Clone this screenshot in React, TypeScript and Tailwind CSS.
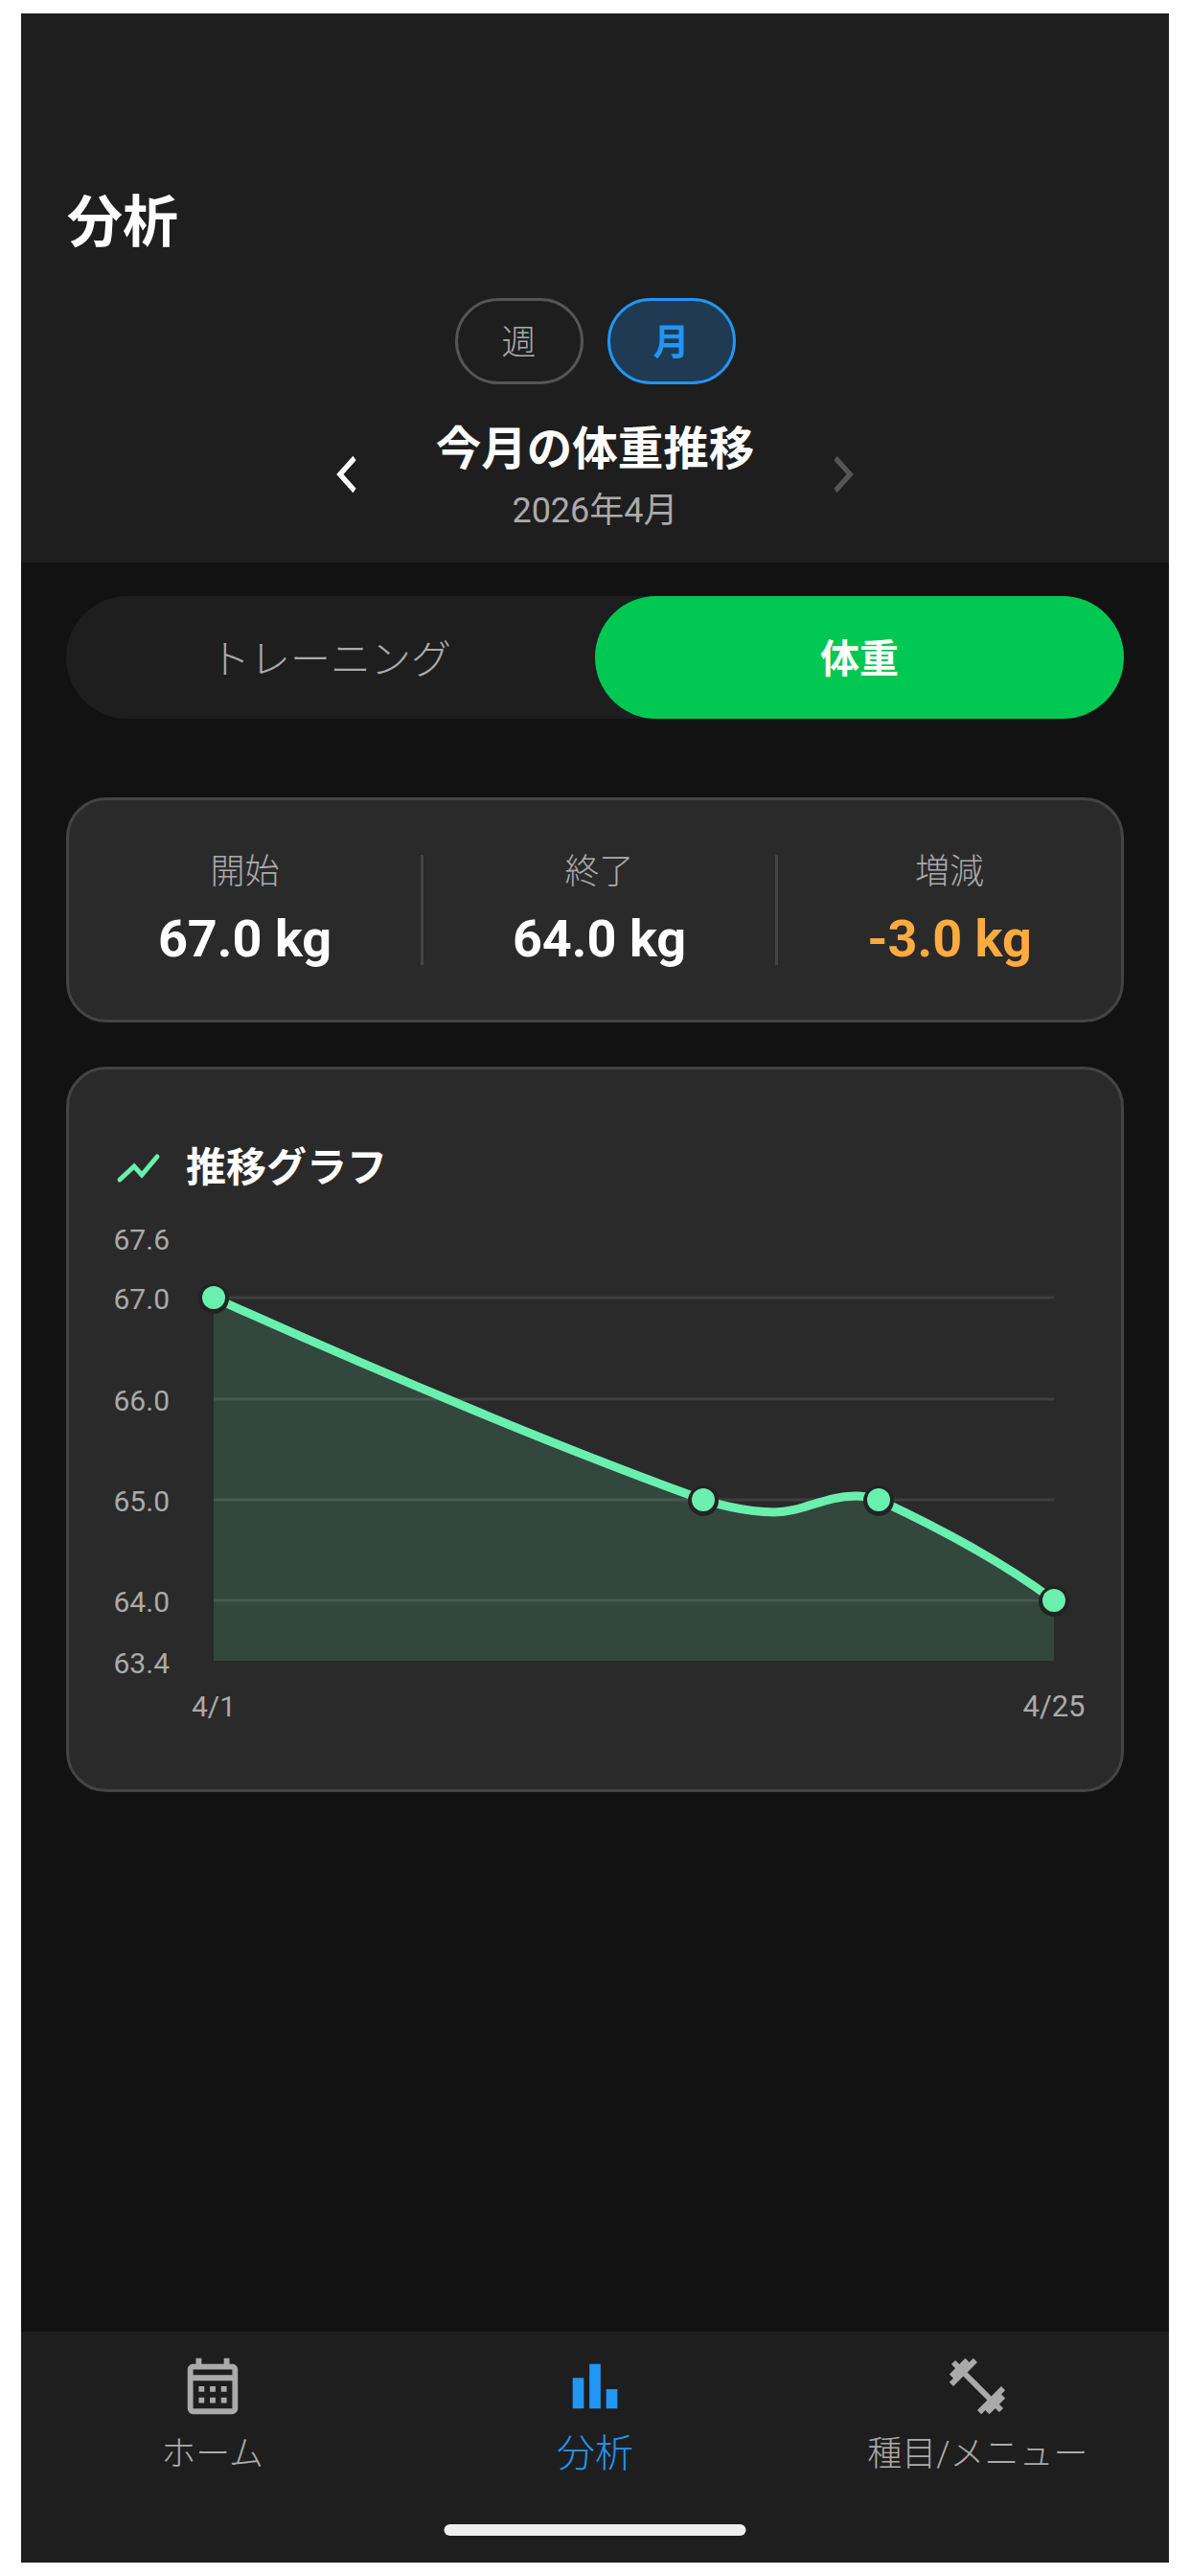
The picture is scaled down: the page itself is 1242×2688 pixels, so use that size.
import React from 'react';
import { MdFitnessCenter, MdOutlineCalendarMonth } from 'react-icons/md';

const yLabels = [
  { label: '67.6', y: 1293 },
  { label: '67.0', y: 1355 },
  { label: '66.0', y: 1461 },
  { label: '65.0', y: 1566 },
  { label: '64.0', y: 1671 },
  { label: '63.4', y: 1735 },
];

const gridLines = [1354, 1460, 1565, 1670];

const points = [
  { x: 223, y: 1354 },
  { x: 734, y: 1565 },
  { x: 917, y: 1565 },
  { x: 1100, y: 1670 },
];

const linePath =
  'M223 1354 C400 1434 600 1517 734 1565 C760 1573 785 1578 808 1578 C838 1578 860 1561 893 1561 C900 1561 910 1563 917 1565 C960 1585 1040 1625 1100 1670';

const stats = [
  { label: '開始', value: '67.0 kg', color: 'text-white' },
  { label: '終了', value: '64.0 kg', color: 'text-white' },
  { label: '増減', value: '-3.0 kg', color: 'text-[#ffab40]' },
];

function WeightChart() {
  return (
    <svg viewBox="72 1270 1098 530" className="mt-[26px] block h-[530px] w-[1098px]">
      <path d={`${linePath} L1100 1733 L223 1733 Z`} fill="#69f0ae" fillOpacity="0.15" />
      {gridLines.map((y) => (
        <line key={y} x1="223" x2="1100" y1={y} y2={y} stroke="#ffffff" strokeOpacity="0.1" strokeWidth="3" />
      ))}
      <path d={linePath} fill="none" stroke="#69f0ae" strokeWidth="9" strokeLinecap="round" />
      {points.map((p) => (
        <g key={p.x}>
          <circle cx={p.x} cy={p.y + 1} r="16" fill="#232323" />
          <circle cx={p.x} cy={p.y} r="12" fill="#69f0ae" />
        </g>
      ))}
      {yLabels.map((t) => (
        <text key={t.label} x="177" y={t.y} textAnchor="end" dominantBaseline="central" fontSize="30" fill="#aaaaaa">
          {t.label}
        </text>
      ))}
      <text x="223" y="1780" textAnchor="middle" dominantBaseline="central" fontSize="30" fill="#aaaaaa">
        4/1
      </text>
      <text x="1100" y="1780" textAnchor="middle" dominantBaseline="central" fontSize="31" fill="#aaaaaa">
        4/25
      </text>
    </svg>
  );
}

function BarsIcon() {
  return (
    <svg viewBox="0 0 24 24" className="h-[70px] w-[70px]" fill="#2196f3">
      <path d="M4 9h4v11H4zm12 4h4v7h-4zm-6-9h4v16h-4z" />
    </svg>
  );
}

function NavItem({ icon, label, active }: { icon: React.ReactNode; label: string; active?: boolean }) {
  return (
    <div className="flex flex-col items-center">
      <div className="flex h-[80px] items-center justify-center">{icon}</div>
      <span className={`mt-[6px] font-light leading-[50px] ${active ? 'text-[40px] text-[#2196f3]' : 'text-[36px] text-[#aaaaaa]'}`}>{label}</span>
    </div>
  );
}

export default function App() {
  return (
    <div className="min-h-[2688px] bg-white px-[22px] pt-[14px] font-['Roboto','Noto_Sans_CJK_JP',sans-serif]">
      <div className="flex h-[2660px] flex-col bg-[#121212]">
        {/* Header */}
        <header className="h-[573px] shrink-0 bg-[#1e1e1e] pt-[183px]">
          <h1 className="pl-[48px] text-[58px] font-bold leading-[70px] text-white">分析</h1>
          <div className="mt-[44px] flex justify-center gap-[25px]">
            <button className="flex h-[90px] w-[134px] items-center justify-center rounded-[45px] border-[3px] border-[#555555] pt-[3px] text-[36px] font-light text-[#aaaaaa]">
              週
            </button>
            <button className="flex h-[90px] w-[134px] items-center justify-center rounded-[45px] border-[3px] border-[#2196f3] bg-[#1f3a52] pt-[3px] text-[38px] font-bold text-[#2196f3]">
              月
            </button>
          </div>
          <div className="mt-[40px] flex items-center justify-center gap-[67px]">
            <svg viewBox="0 0 48 48" className="-mt-[7px] h-[48px] w-[48px]" fill="none" stroke="#ffffff" strokeWidth="6">
              <polyline points="34,7 15,24 34,41" transform="translate(24 24) scale(0.8 1) translate(-24 -24)" />
            </svg>
            <div className="flex w-[336px] flex-col items-center pt-[3px]">
              <span className="whitespace-nowrap text-[47.5px] font-bold leading-[50px] text-white">今月の体重推移</span>
              <span className="mt-[17px] text-[36px] leading-[44px] text-[#aaaaaa]">2026年4月</span>
            </div>
            <svg viewBox="0 0 48 48" className="-mt-[7px] h-[48px] w-[48px]" fill="none" stroke="#555555" strokeWidth="6">
              <polyline points="14,7 33,24 14,41" transform="translate(24 24) scale(0.8 1) translate(-24 -24)" />
            </svg>
          </div>
        </header>

        {/* Content */}
        <main className="flex-1 px-[47px] pt-[35px]">
          <div className="flex h-[128px] rounded-full bg-[#1e1e1e]">
            <div className="flex flex-1 items-center justify-center pt-[5px] text-[42px] font-light text-[#aaaaaa]">トレーニング</div>
            <div className="flex flex-1 items-center justify-center rounded-full bg-[#00c853] pt-[5px] text-[41px] font-bold text-white">
              体重
            </div>
          </div>

          <div className="mt-[82px] grid h-[235px] grid-cols-[370px_370px_1fr] items-center rounded-[42px] border-[3px] border-[#444444] bg-[#2a2a2a]">
            {stats.map((s, i) => (
              <div
                key={s.label}
                className={`flex h-[115px] flex-col items-center ${i < 2 ? 'border-r-[3px] border-[#444444]' : ''}`}
              >
                <span className="text-[36px] font-light leading-[36px] text-[#aaaaaa]">{s.label}</span>
                <span className={`mt-[20px] text-[54px] font-bold leading-[64px] ${s.color}`}>{s.value}</span>
              </div>
            ))}
          </div>

          <div className="mt-[46px] h-[757px] rounded-[42px] border-[3px] border-[#444444] bg-[#2a2a2a] pt-[75px]">
            <div className="flex items-center gap-[24px] pl-[48px]">
              <svg viewBox="0 0 50 40" className="-mt-[5px] h-[40px] w-[50px]" fill="none" stroke="#69f0ae" strokeWidth="5" strokeLinecap="round">
                <polyline points="5,34 20,20 28,29 44,10" />
              </svg>
              <span className="text-[42px] font-bold leading-[56px] text-white">推移グラフ</span>
            </div>
            <div className="-mt-[3px]">
              <WeightChart />
            </div>
          </div>
        </main>

        {/* Bottom navigation */}
        <nav className="relative h-[241px] shrink-0 bg-[#1e1e1e] pt-[17px]">
          <div className="grid grid-cols-3">
            <NavItem icon={<MdOutlineCalendarMonth size={70} color="#aaaaaa" />} label="ホーム" />
            <NavItem icon={<BarsIcon />} label="分析" active />
            <NavItem icon={<MdFitnessCenter size={70} color="#aaaaaa" />} label="種目/メニュー" />
          </div>
          <div className="absolute bottom-[28px] left-1/2 h-[12px] w-[315px] -translate-x-1/2 rounded-full bg-[#eeeeee]" />
        </nav>
      </div>
    </div>
  );
}
